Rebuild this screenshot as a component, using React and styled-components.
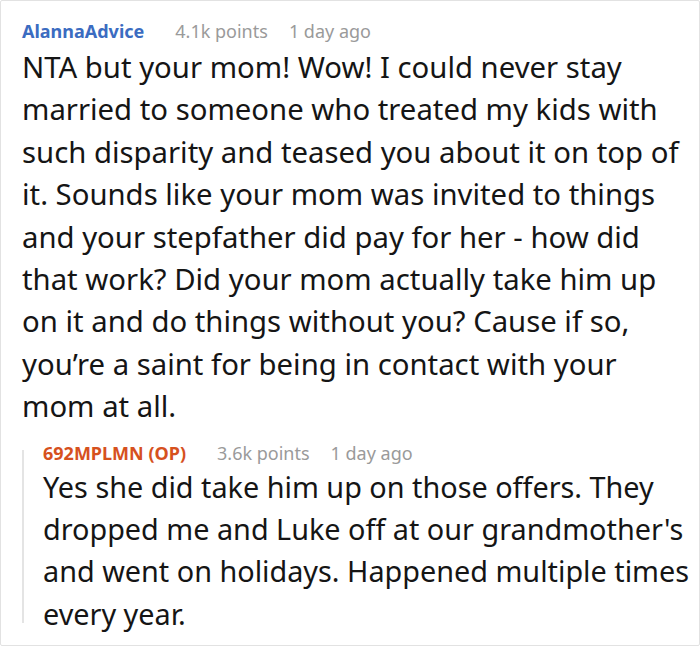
import React from 'react'
import styled, { createGlobalStyle } from 'styled-components'

const Global = createGlobalStyle`
  html, body {
    margin: 0;
    padding: 0;
    background: #fff;
  }
  body {
    font-family: "Noto Sans", "Open Sans", sans-serif;
  }
`

// lines kept as they wrap in the original post
const comment = {
  author: 'AlannaAdvice',
  points: '4.1k points',
  time: '1 day ago',
  lines: [
    'NTA but your mom! Wow! I could never stay',
    'married to someone who treated my kids with',
    'such disparity and teased you about it on top of',
    'it. Sounds like your mom was invited to things',
    'and your stepfather did pay for her - how did',
    'that work? Did your mom actually take him up',
    'on it and do things without you? Cause if so,',
    'you\u2019re a saint for being in contact with your',
    'mom at all.',
  ],
  reply: {
    author: '692MPLMN (OP)',
    op: true,
    points: '3.6k points',
    time: '1 day ago',
    lines: [
      'Yes she did take him up on those offers. They',
      "dropped me and Luke off at our grandmother's",
      'and went on holidays. Happened multiple times',
      'every year.',
    ],
  },
}

const Comment = ({ author, op, points, time, lines, nested, children }) => (
  <Body>
    <Meta>
      <Author op={op}>{author}</Author>
      <Points>{points}</Points>
      <Time>{time}</Time>
    </Meta>
    <Text nested={nested}>
      {lines.map((l, i) => (
        <Line key={i}>{l}</Line>
      ))}
    </Text>
    {children}
  </Body>
)

const App = () => (
  <>
    <Global />
    <Card>
      <Comment {...comment}>
        <Reply>
          <Comment {...comment.reply} nested />
        </Reply>
      </Comment>
    </Card>
  </>
)

const Card = styled.div`
  box-sizing: border-box;
  width: 700px;
  height: 646px;
  border: 1px solid #e2e2e2;
  border-radius: 2px;
  padding: 17px 0 0 21px;
  overflow: hidden;
`

const Body = styled.div`
  display: flex;
  flex-direction: column;
`

const Meta = styled.div`
  display: flex;
  align-items: baseline;
  font-size: 18px;
  line-height: 26px;
  white-space: nowrap;
`

const Author = styled.span`
  font-weight: 700;
  color: ${p => (p.op ? '#d6511e' : '#3b6cc1')};
  margin-right: 31px;
`

const Points = styled.span`
  color: #9a9a9a;
  margin-right: 21px;
`

const Time = styled.span`
  color: #9a9a9a;
`

const Text = styled.p`
  margin: ${p => (p.nested ? '0' : '2px')} 0 0;
  font-size: ${p => (p.nested ? '28.8px' : '29.3px')};
  line-height: 42.4px;
  color: #151515;
`

const Line = styled.span`
  display: block;
  white-space: nowrap;
`

const Reply = styled.div`
  position: relative;
  margin-top: 12px;
  padding-left: 21px;

  &::before {
    content: '';
    position: absolute;
    left: 0;
    top: 10px;
    bottom: 12px;
    width: 2px;
    background: #e4e4e4;
  }
`

export default App
